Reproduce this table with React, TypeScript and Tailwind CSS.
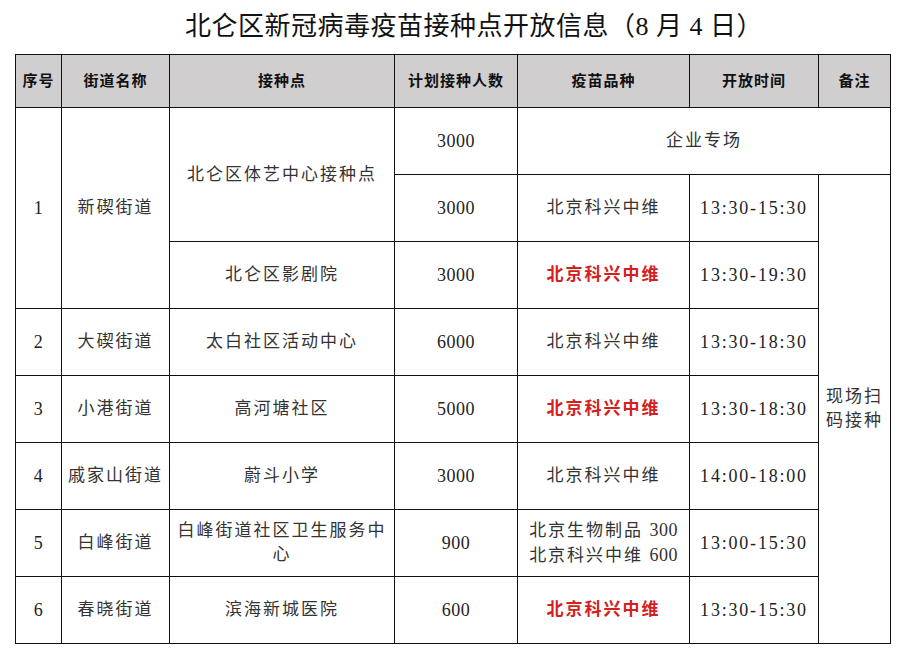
import React from "react";

const CJK = '"Liberation Serif", "Noto Sans CJK SC", serif';

type Cell = {
  text: React.ReactNode;
  rowSpan?: number;
  colSpan?: number;
  red?: boolean;
  num?: boolean;
  time?: boolean;
};

const rows: Cell[][] = [
  [
    { text: "1", rowSpan: 3, num: true },
    { text: "新碶街道", rowSpan: 3 },
    { text: "北仑区体艺中心接种点", rowSpan: 2 },
    { text: "3000", num: true },
    { text: "企业专场", colSpan: 3 },
  ],
  [
    { text: "3000", num: true },
    { text: "北京科兴中维" },
    { text: "13:30-15:30", time: true },
    { text: "现场扫码接种", rowSpan: 7 },
  ],
  [
    { text: "北仑区影剧院" },
    { text: "3000", num: true },
    { text: "北京科兴中维", red: true },
    { text: "13:30-19:30", time: true },
  ],
  [
    { text: "2", num: true },
    { text: "大碶街道" },
    { text: "太白社区活动中心" },
    { text: "6000", num: true },
    { text: "北京科兴中维" },
    { text: "13:30-18:30", time: true },
  ],
  [
    { text: "3", num: true },
    { text: "小港街道" },
    { text: "高河塘社区" },
    { text: "5000", num: true },
    { text: "北京科兴中维", red: true },
    { text: "13:30-18:30", time: true },
  ],
  [
    { text: "4", num: true },
    { text: "戚家山街道" },
    { text: "蔚斗小学" },
    { text: "3000", num: true },
    { text: "北京科兴中维" },
    { text: "14:00-18:00", time: true },
  ],
  [
    { text: "5", num: true },
    { text: "白峰街道" },
    { text: "白峰街道社区卫生服务中心" },
    { text: "900", num: true },
    {
      text: (
        <span className="block leading-[24px]">
          北京生物制品 <span className="text-[18px] tracking-[0.5px]">300</span>
          <br />
          北京科兴中维 <span className="text-[18px] tracking-[0.5px]">600</span>
        </span>
      ),
    },
    { text: "13:00-15:30", time: true },
  ],
  [
    { text: "6", num: true },
    { text: "春晓街道" },
    { text: "滨海新城医院" },
    { text: "600", num: true },
    { text: "北京科兴中维", red: true },
    { text: "13:30-15:30", time: true },
  ],
];

const heads = ["序号", "街道名称", "接种点", "计划接种人数", "疫苗品种", "开放时间", "备注"];
const widths = ["w-[46px]", "w-[108px]", "w-[225px]", "w-[123px]", "w-[172px]", "w-[129px]", "w-[72px]"];

export default function App() {
  return (
    <div className="w-[898px] h-[652px] bg-white overflow-hidden" style={{ fontFamily: CJK }}>
      {/* 标题 */}
      <div className="h-[54px] flex items-center justify-center pl-[50px]">
        <h1 className="text-[26px] font-normal text-[#111] leading-none tracking-[0.5px]">
          北仑区新冠病毒疫苗接种点开放信息（8 月 4 日）
        </h1>
      </div>
      <table className="ml-[15px] w-[875px] table-fixed border-collapse">
        <colgroup>
          {widths.map((w, i) => (
            <col key={i} className={w} />
          ))}
        </colgroup>
        <thead>
          <tr className="h-[53px] bg-[#d0cece]">
            {heads.map((h) => (
              <th
                key={h}
                className="border border-[#111] text-center text-[15px] font-bold text-[#111] tracking-[1px]"
              >
                {h}
              </th>
            ))}
          </tr>
        </thead>
        <tbody>
          {rows.map((row, ri) => (
            <tr key={ri} className="h-[67px]">
              {row.map((c, ci) => (
                <td
                  key={ci}
                  rowSpan={c.rowSpan}
                  colSpan={c.colSpan}
                  className={
                    "border border-[#111] text-center px-1 " +
                    (c.red
                      ? "text-[17px] font-bold text-[#d42020] tracking-[2px] "
                      : c.num
                      ? "text-[18px] text-[#222] tracking-[0.5px] "
                      : c.time
                      ? "text-[18px] text-[#222] tracking-[1.8px] "
                      : "text-[17px] text-[#333] tracking-[2px] leading-[24px] ") +
                    (c.rowSpan === 7 ? "px-[7px]" : "")
                  }
                >
                  {c.text}
                </td>
              ))}
            </tr>
          ))}
        </tbody>
      </table>
    </div>
  );
}
